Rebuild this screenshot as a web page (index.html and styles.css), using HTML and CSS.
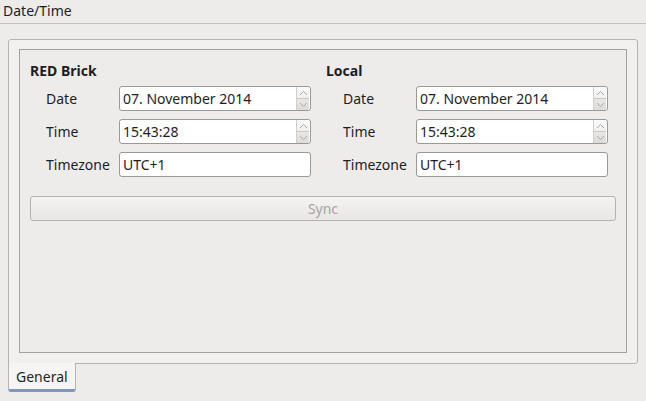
FILE: index.html
```html
<!DOCTYPE html>
<html>
<head>
<meta charset="utf-8">
<link rel="stylesheet" href="styles.css">
</head>
<body>
<div class="header">Date/Time</div>
<div class="tabs">
  <div class="pane">
    <div class="frame">
      <div class="cols">
        <div class="col">
          <div class="title">RED Brick</div>
          <div class="row"><span class="lbl">Date</span><div class="field spin"><span class="val">07. November 2014</span><div class="arrows"><div class="up"><svg width="9" height="6" viewBox="0 0 9 6"><path d="M1 5 L4.5 1.5 L8 5" fill="none" stroke="#a9a9a9" stroke-width="1"/></svg></div><div class="down"><svg width="9" height="6" viewBox="0 0 9 6"><path d="M1 1 L4.5 4.5 L8 1" fill="none" stroke="#a9a9a9" stroke-width="1"/></svg></div></div></div></div>
          <div class="row"><span class="lbl">Time</span><div class="field spin"><span class="val">15:43:28</span><div class="arrows"><div class="up"><svg width="9" height="6" viewBox="0 0 9 6"><path d="M1 5 L4.5 1.5 L8 5" fill="none" stroke="#a9a9a9" stroke-width="1"/></svg></div><div class="down"><svg width="9" height="6" viewBox="0 0 9 6"><path d="M1 1 L4.5 4.5 L8 1" fill="none" stroke="#a9a9a9" stroke-width="1"/></svg></div></div></div></div>
          <div class="row"><span class="lbl">Timezone</span><div class="field"><span class="val">UTC+1</span></div></div>
        </div>
        <div class="col">
          <div class="title">Local</div>
          <div class="row"><span class="lbl">Date</span><div class="field spin"><span class="val">07. November 2014</span><div class="arrows"><div class="up"><svg width="9" height="6" viewBox="0 0 9 6"><path d="M1 5 L4.5 1.5 L8 5" fill="none" stroke="#a9a9a9" stroke-width="1"/></svg></div><div class="down"><svg width="9" height="6" viewBox="0 0 9 6"><path d="M1 1 L4.5 4.5 L8 1" fill="none" stroke="#a9a9a9" stroke-width="1"/></svg></div></div></div></div>
          <div class="row"><span class="lbl">Time</span><div class="field spin"><span class="val">15:43:28</span><div class="arrows"><div class="up"><svg width="9" height="6" viewBox="0 0 9 6"><path d="M1 5 L4.5 1.5 L8 5" fill="none" stroke="#a9a9a9" stroke-width="1"/></svg></div><div class="down"><svg width="9" height="6" viewBox="0 0 9 6"><path d="M1 1 L4.5 4.5 L8 1" fill="none" stroke="#a9a9a9" stroke-width="1"/></svg></div></div></div></div>
          <div class="row"><span class="lbl">Timezone</span><div class="field"><span class="val">UTC+1</span></div></div>
        </div>
      </div>
      <div class="sync">Sync</div>
    </div>
  </div>
  <div class="tab">General</div>
</div>
</body>
</html>
```

FILE: styles.css
```css
* { box-sizing: border-box; }
html, body { margin: 0; padding: 0; }
body {
  width: 646px;
  height: 401px;
  background: #edeceb;
  font-family: "Noto Sans", "Open Sans", sans-serif;
  font-size: 14px;
  color: #1e1e1e;
  overflow: hidden;
}
.header {
  height: 24px;
  line-height: 22px;
  padding-left: 3px;
  border-bottom: 1px solid #c3c2c1;
  background: #edeceb;
}
.tabs {
  padding: 15px 0 0 8px;
}
.pane {
  width: 630px;
  height: 325px;
  border: 1px solid #b5b4b3;
  border-radius: 3px 3px 3px 0;
  background: #f1f0ef;
  padding: 9px 10px 0 10px;
}
.frame {
  width: 608px;
  height: 304px;
  border: 1px solid #a3a2a1;
  background: #edeceb;
  padding: 12px 10px 0 10px;
}
.cols {
  display: grid;
  grid-template-columns: 296px 290px;
}
.title {
  font-weight: bold;
  height: 21px;
  line-height: 18px;
}
.row {
  display: flex;
  align-items: center;
  height: 25px;
  margin-top: 8px;
}
.col .title + .row { margin-top: 3px; }
.lbl {
  width: 89px;
  padding-left: 16px;
}
.col + .col .lbl { padding-left: 17px; width: 90px; }
.field {
  width: 192px;
  height: 25px;
  border: 1px solid #9a9998;
  border-radius: 3px;
  background: #ffffff;
  display: flex;
  align-items: center;
  padding-left: 3px;
  position: relative;
}
.val { flex: 1; }
.arrows {
  width: 13px;
  height: 23px;
  margin-right: 1px;
  display: flex;
  flex-direction: column;
  border-left: 1px solid #d0cfce;
}
.up, .down {
  flex: 1;
  display: flex;
  align-items: center;
  justify-content: center;
}
.up {
  background: linear-gradient(#fbfbfb, #f0efee);
  border-bottom: 1px solid #c9c8c7;
}
.down {
  background: linear-gradient(#e8e7e6, #dcdbda);
  border-radius: 0 0 2px 0;
}
.sync {
  margin-top: 19px;
  width: 586px;
  height: 25px;
  border: 1px solid #b3b2b1;
  border-radius: 3px;
  background: linear-gradient(#f4f3f2, #e8e7e6);
  color: #a5a4a3;
  text-align: center;
  line-height: 23px;
}
.tab {
  width: 68px;
  height: 29px;
  margin-top: -1px;
  background: #f6f5f4;
  border: 1px solid #b5b4b3;
  border-top: none;
  border-bottom: 3px solid #7d97be;
  border-radius: 0 0 3px 3px;
  padding-left: 7px;
  line-height: 27px;
}
```
